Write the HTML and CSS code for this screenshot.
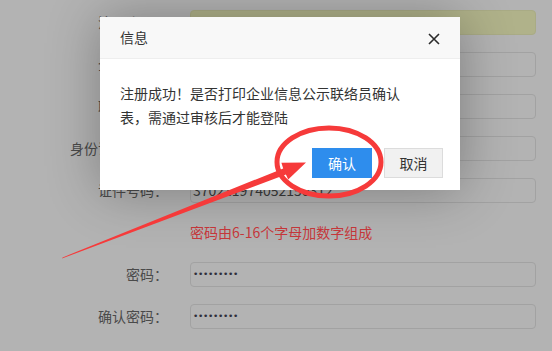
FILE: index.html
```html
<!DOCTYPE html>
<html>
<head>
    <meta charset="UTF-8">
    <title>注册</title>
    <link rel="stylesheet" href="styles.css">
</head>
<body>
    <div class="form">
        <div class="row">
            <label class="label">注册账号：</label>
            <div class="field autofill">zhangsan</div>
        </div>
        <div class="row">
            <label class="label">企业名称：</label>
            <div class="field"></div>
        </div>
        <div class="row">
            <label class="label">联系人员：</label>
            <div class="field"></div>
        </div>
        <div class="row">
            <label class="label">身份证件类型：</label>
            <div class="field">身份证</div>
        </div>
        <div class="row">
            <label class="label">证件号码：</label>
            <div class="field">370211974052150312</div>
        </div>
        <div class="row">
            <span class="label"></span>
            <span class="hint">密码由6-16个字母加数字组成</span>
        </div>
        <div class="row">
            <label class="label">密码：</label>
            <div class="field"><span class="dots">•••••••••</span></div>
        </div>
        <div class="row">
            <label class="label">确认密码：</label>
            <div class="field"><span class="dots">•••••••••</span></div>
        </div>
    </div>

    <div class="dialog">
        <div class="dialog-title">
            信息
            <svg class="close" width="12" height="12" viewBox="0 0 12 12">
                <path d="M1 1 L11 11 M11 1 L1 11" stroke="#2b2b2b" stroke-width="1.6" fill="none"/>
            </svg>
        </div>
        <div class="dialog-content"><p class="msg">注册成功！是否打印企业信息公示联络员确认表，需通过审核后才能登陆</p></div>
        <div class="dialog-btns">
            <a class="btn btn-primary">确认</a>
            <a class="btn">取消</a>
        </div>
    </div>

    <!-- red annotation drawn over the screenshot -->
    <svg class="marks" width="552" height="351" viewBox="0 0 552 351">
        <ellipse cx="329" cy="162" rx="52" ry="34" fill="none" stroke="#f63a3a" stroke-width="5"/>
        <polygon fill="#f63a3a" points="62,258.5 62.6,257.4 283.2,168.4 281.4,162.8 306,162.5 288.2,179.6 285.9,174.4"/>
    </svg>
</body>
</html>
```

FILE: styles.css
```css
body {
    margin: 0;
    width: 552px;
    height: 351px;
    overflow: hidden;
    background: #b3b3b3;
    font-family: "Noto Sans CJK SC", "Microsoft YaHei", sans-serif;
    font-size: 14px;
    color: #333;
}
.form {
    padding-top: 1px;
}
.row {
    display: flex;
    align-items: center;
    height: 42px;
}
.label {
    width: 168px;
    flex-shrink: 0;
    text-align: right;
    color: #4a4a4a;
    white-space: nowrap;
}
.field {
    box-sizing: border-box;
    width: 346px;
    height: 25px;
    margin-left: 22px;
    border: 1px solid #a2a2a2;
    border-radius: 4px;
    padding: 0 2px;
    display: flex;
    align-items: center;
    color: #3a3a3a;
    white-space: nowrap;
    overflow: hidden;
}
.autofill {
    background: #b0b28a;
    border-color: #a9ab85;
    color: transparent;
}
.hint {
    margin-left: 22px;
    color: #c8383b;
}
.dots {
    font-family: "DejaVu Sans", sans-serif;
    font-size: 9px;
    letter-spacing: -0.3px;
    color: #2e2e3a;
}
.dialog {
    position: absolute;
    left: 100px;
    top: 17px;
    width: 360px;
    background: #fff;
    box-shadow: 1px 1px 50px rgba(0,0,0,0.3);
}
.dialog-title {
    position: relative;
    height: 41px;
    line-height: 41px;
    padding: 0 20px;
    background: #f8f8f8;
    border-bottom: 1px solid #eee;
    color: #333;
}
.close {
    position: absolute;
    right: 20px;
    top: 16px;
}
.dialog-content {
    padding: 22px 20px 0;
    line-height: 24px;
    color: #333;
}
.msg {
    width: 285px;
    margin: 0;
}
.dialog-btns {
    display: flex;
    justify-content: flex-end;
    gap: 12px;
    padding: 19px 17px 12px;
}
.btn {
    box-sizing: border-box;
    width: 59px;
    height: 30px;
    line-height: 28px;
    text-align: center;
    border: 1px solid #dcdcdc;
    background: #f1f1f1;
    color: #333;
}
.btn-primary {
    width: 60px;
    border-color: #2e8ded;
    background: #2e8ded;
    color: #fff;
}
.marks {
    position: absolute;
    left: 0;
    top: 0;
}
```
